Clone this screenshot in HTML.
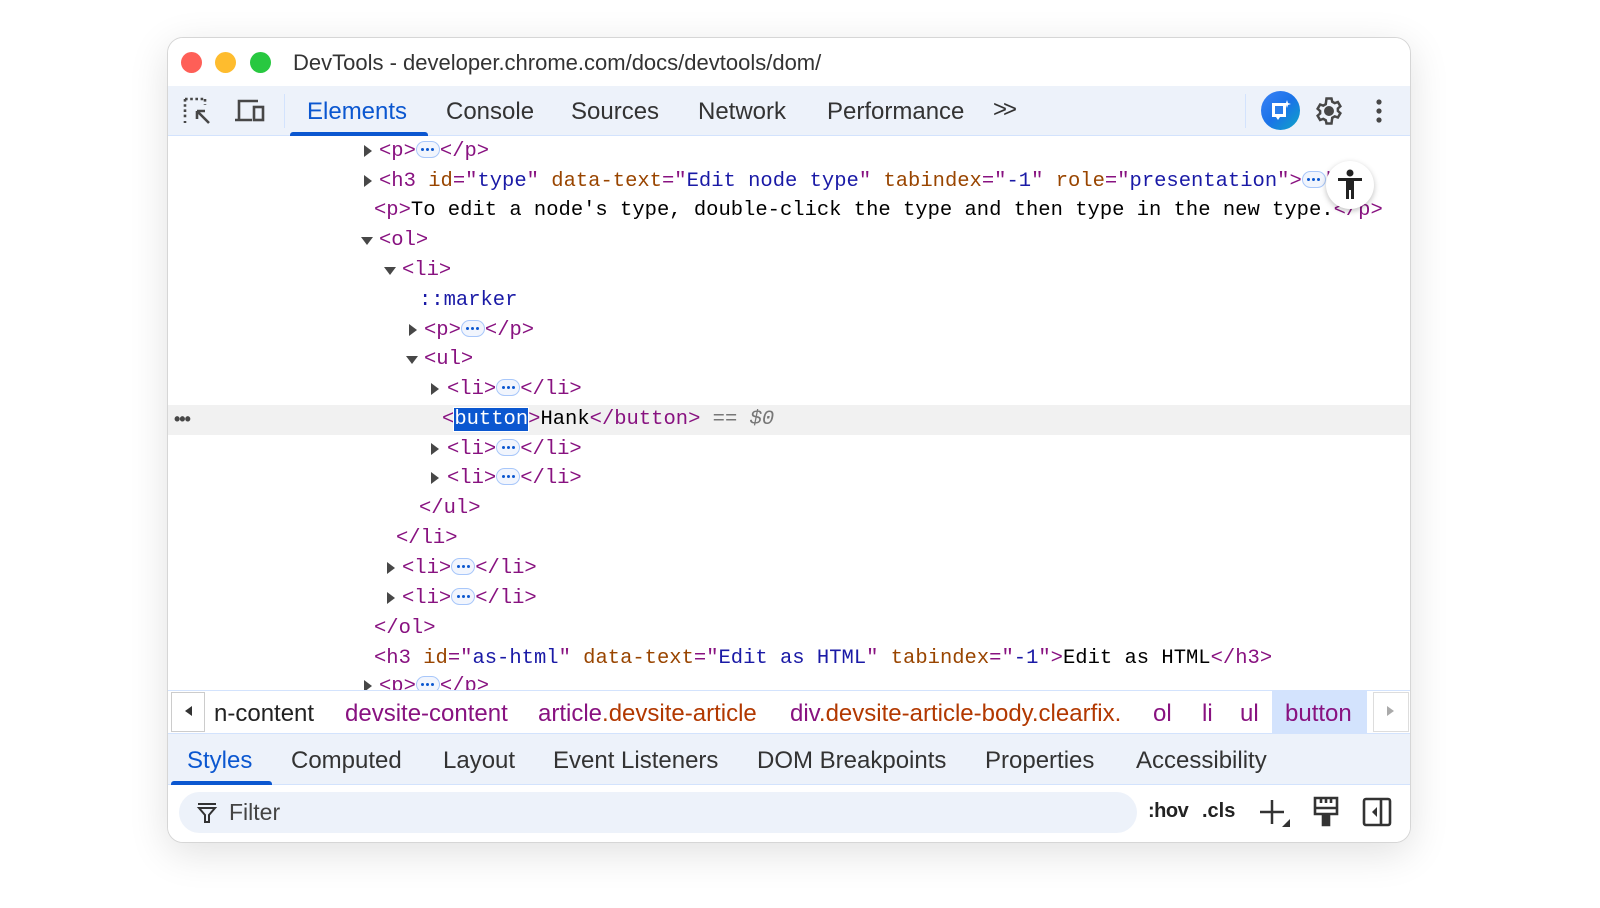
<!DOCTYPE html>
<html><head><meta charset="utf-8">
<style>
*{box-sizing:border-box;margin:0;padding:0}
body{width:1600px;height:908px;background:#fff;position:relative;overflow:hidden;font-family:"Liberation Sans",sans-serif}
.win{position:absolute;left:167px;top:37px;width:1244px;height:806px;border-radius:16px;border:1px solid #d6d6d6;background:#fff;overflow:hidden;box-shadow:0 10px 40px rgba(0,0,0,.12)}
.title{position:absolute;left:0;top:0;width:100%;height:48px;background:#fff}
.dot{position:absolute;top:14px;width:21px;height:21px;border-radius:50%}
.ttl{position:absolute;left:125px;top:12px;font-size:22px;color:#333}
.tb{position:absolute;left:0;top:48px;width:100%;height:50px;background:#edf2fa;border-bottom:1px solid #d3e3fd}
.tab{position:absolute;top:12px;font-size:24px;color:#333}
.dom{position:absolute;left:0;top:99px;width:100%;height:553px;background:#fff;overflow:hidden}
.ln{position:absolute;font-family:"Liberation Mono",monospace;font-size:20.5px;white-space:pre;height:30px;line-height:30px}
.t{color:#881280}.an{color:#994500}.av{color:#1a1aa6}.k{color:#1a1aa6}
.tri{position:absolute;width:0;height:0}
.tr{border-top:6px solid transparent;border-bottom:6px solid transparent;border-left:8px solid #474747}
.td{border-left:6px solid transparent;border-right:6px solid transparent;border-top:8px solid #474747}
.el{display:inline-flex;align-items:center;justify-content:center;gap:2px;width:24px;height:17px;border:1.5px solid #a8c7fa;border-radius:9px;vertical-align:middle;position:relative;top:-1px;background:#f1f5fd}
.el i{display:block;width:3px;height:3px;border-radius:50%;background:#0b57d0}
.bc{position:absolute;left:0;top:652px;width:100%;height:44px;background:#fff;border-top:1px solid #d3e3fd;border-bottom:1px solid #d3e3fd}
.bci{position:absolute;top:9px;font-size:24px}
.st{position:absolute;left:0;top:696px;width:100%;height:51px;background:#edf2fa;border-bottom:1px solid #d3e3fd}
.fr{position:absolute;left:0;top:747px;width:100%;height:59px;background:#fff}
</style></head><body>
<div class="win">
 <div class="title">
  <div class="dot" style="left:13px;background:#fe5f57"></div>
  <div class="dot" style="left:47px;background:#febc2e"></div>
  <div class="dot" style="left:82px;background:#28c840"></div>
  <div class="ttl">DevTools - developer.chrome.com/docs/devtools/dom/</div>
 </div>
 <div class="tb">
  <svg style="position:absolute;left:14px;top:10px" width="30" height="30" viewBox="0 0 30 30" fill="none" stroke="#474747" stroke-width="2.6"><path d="M3 3h20M3 3v20M3 25v2M23 3v6" stroke-dasharray="2.6 2.6"/><path d="M27 27L15 15M15 15v8M15 15h8"/></svg>
  <svg style="position:absolute;left:66px;top:12px" width="32" height="26" viewBox="0 0 32 26" fill="none" stroke="#474747" stroke-width="2.6"><path d="M5 22V3h19M1 22h17"/><rect x="20" y="9" width="9" height="13"/></svg>
  <div style="position:absolute;left:116px;top:8px;width:1px;height:34px;background:#d3e3fd"></div>
  <div class="tab" style="left:139px;color:#0b57d0">Elements</div>
  <div style="position:absolute;left:122px;top:46px;width:138px;height:4px;background:#0b57d0;border-radius:3px 3px 0 0"></div>
  <div class="tab" style="left:278px">Console</div>
  <div class="tab" style="left:403px">Sources</div>
  <div class="tab" style="left:530px">Network</div>
  <div class="tab" style="left:659px">Performance</div>
  <div class="tab" style="left:825px;font-size:24px;top:10px;letter-spacing:-4px">&gt;&gt;</div>
  <div style="position:absolute;left:1077px;top:8px;width:1px;height:34px;background:#d3e3fd"></div>
  <div style="position:absolute;left:1093px;top:5px;width:39px;height:39px;border-radius:50%;background:linear-gradient(135deg,#3b82f6,#1a73e8,#0ea5c6)"></div>
  <svg style="position:absolute;left:1101px;top:13px" width="24" height="24" viewBox="0 0 24 24"><path d="M3 4h14v14h-6l-2 3-2-3H3z" fill="#fff"/><path d="M6 7h8v8H6z" fill="#2b7de9"/><path d="M18 1l1 3 3 1-3 1-1 3-1-3-3-1 3-1z" fill="#fff"/></svg>
  <svg style="position:absolute;left:1146px;top:10px" width="30" height="30" viewBox="0 0 24 24" fill="none" stroke="#474747" stroke-width="2"><circle cx="12" cy="12" r="3" fill="#474747"/><path d="M10 2h4l.6 2.6 2 1.1 2.5-.9 2 3.4-2 1.8v2l2 1.8-2 3.4-2.5-.9-2 1.1L14 22h-4l-.6-2.6-2-1.1-2.5.9-2-3.4 2-1.8v-2l-2-1.8 2-3.4 2.5.9 2-1.1z"/></svg>
  <svg style="position:absolute;left:1207px;top:12px" width="8" height="26"><circle cx="4" cy="4" r="2.6" fill="#474747"/><circle cx="4" cy="13" r="2.6" fill="#474747"/><circle cx="4" cy="22" r="2.6" fill="#474747"/></svg>
 </div>
 <div class="dom">
  <div style="position:absolute;left:0;top:268px;width:100%;height:30px;background:#f1f1f1"></div>
  <div style="position:absolute;left:6px;top:272px;font-size:18px;color:#474747;font-weight:bold;letter-spacing:-1px">•••</div>

  <div class="tri tr" style="left:196px;top:8px"></div>
  <div class="ln" style="left:211px;top:0"><span class="t">&lt;p&gt;</span><span class="el"><i></i><i></i><i></i></span><span class="t">&lt;/p&gt;</span></div>
  <div class="tri tr" style="left:196px;top:38px"></div>
  <div class="ln" style="left:211px;top:30px"><span class="t">&lt;h3 </span><span class="an">id</span><span class="t">="</span><span class="av">type</span><span class="t">" </span><span class="an">data-text</span><span class="t">="</span><span class="av">Edit node type</span><span class="t">" </span><span class="an">tabindex</span><span class="t">="</span><span class="av">-1</span><span class="t">" </span><span class="an">role</span><span class="t">="</span><span class="av">presentation</span><span class="t">"&gt;</span><span class="el"><i></i><i></i><i></i></span><span class="t">h3&gt;</span></div>
  <div class="ln" style="left:206px;top:59px"><span class="t">&lt;p&gt;</span>To edit a node's type, double-click the type and then type in the new type.<span class="t">&lt;/p&gt;</span></div>
  <div style="position:absolute;left:1158px;top:24px;width:48px;height:48px;border-radius:50%;background:#fff;box-shadow:0 2px 6px rgba(0,0,0,.25)"></div>
  <svg style="position:absolute;left:1168px;top:32px" width="28" height="32" viewBox="0 0 28 32" fill="#222"><circle cx="14" cy="4" r="3.5"/><path d="M2 9h24v3h-8v18h-3v-9h-2v9h-3V12H2z"/></svg>

  <div class="tri td" style="left:193px;top:100px"></div>
  <div class="ln" style="left:211px;top:89px"><span class="t">&lt;ol&gt;</span></div>
  <div class="tri td" style="left:216px;top:130px"></div>
  <div class="ln" style="left:234px;top:119px"><span class="t">&lt;li&gt;</span></div>
  <div class="ln" style="left:251px;top:149px"><span class="k">::marker</span></div>
  <div class="tri tr" style="left:241px;top:187px"></div>
  <div class="ln" style="left:256px;top:179px"><span class="t">&lt;p&gt;</span><span class="el"><i></i><i></i><i></i></span><span class="t">&lt;/p&gt;</span></div>
  <div class="tri td" style="left:238px;top:219px"></div>
  <div class="ln" style="left:256px;top:208px"><span class="t">&lt;ul&gt;</span></div>
  <div class="tri tr" style="left:263px;top:246px"></div>
  <div class="ln" style="left:279px;top:238px"><span class="t">&lt;li&gt;</span><span class="el"><i></i><i></i><i></i></span><span class="t">&lt;/li&gt;</span></div>
  <div class="ln" style="left:274px;top:268px"><span class="t">&lt;</span><span style="background:#0b57d0;color:#fff;outline:1px solid #fff">button</span><span class="t">&gt;</span>Hank<span class="t">&lt;/button&gt;</span><span style="color:#777"> == <i>$0</i></span></div>
  <div class="tri tr" style="left:263px;top:306px"></div>
  <div class="ln" style="left:279px;top:298px"><span class="t">&lt;li&gt;</span><span class="el"><i></i><i></i><i></i></span><span class="t">&lt;/li&gt;</span></div>
  <div class="tri tr" style="left:263px;top:335px"></div>
  <div class="ln" style="left:279px;top:327px"><span class="t">&lt;li&gt;</span><span class="el"><i></i><i></i><i></i></span><span class="t">&lt;/li&gt;</span></div>
  <div class="ln" style="left:251px;top:357px"><span class="t">&lt;/ul&gt;</span></div>
  <div class="ln" style="left:228px;top:387px"><span class="t">&lt;/li&gt;</span></div>
  <div class="tri tr" style="left:219px;top:425px"></div>
  <div class="ln" style="left:234px;top:417px"><span class="t">&lt;li&gt;</span><span class="el"><i></i><i></i><i></i></span><span class="t">&lt;/li&gt;</span></div>
  <div class="tri tr" style="left:219px;top:455px"></div>
  <div class="ln" style="left:234px;top:447px"><span class="t">&lt;li&gt;</span><span class="el"><i></i><i></i><i></i></span><span class="t">&lt;/li&gt;</span></div>
  <div class="ln" style="left:206px;top:477px"><span class="t">&lt;/ol&gt;</span></div>
  <div class="ln" style="left:206px;top:507px"><span class="t">&lt;h3 </span><span class="an">id</span><span class="t">="</span><span class="av">as-html</span><span class="t">" </span><span class="an">data-text</span><span class="t">="</span><span class="av">Edit as HTML</span><span class="t">" </span><span class="an">tabindex</span><span class="t">="</span><span class="av">-1</span><span class="t">"&gt;</span>Edit as HTML<span class="t">&lt;/h3&gt;</span></div>
  <div class="tri tr" style="left:196px;top:543px"></div>
  <div class="ln" style="left:211px;top:535px"><span class="t">&lt;p&gt;</span><span class="el"><i></i><i></i><i></i></span><span class="t">&lt;/p&gt;</span></div>
 </div>
 <div class="bc">
  <div style="position:absolute;left:3px;top:1px;width:34px;height:40px;border:1px solid #ccc;background:#fff"></div>
  <div class="tri" style="left:17px;top:15px;border-top:5px solid transparent;border-bottom:5px solid transparent;border-right:7px solid #333"></div>
  <div class="bci" style="left:46px;color:#222">n-content</div>
  <div class="bci" style="left:177px;color:#881280">devsite-content</div>
  <div class="bci" style="left:370px;color:#881280">article<span style="color:#b23800">.devsite-article</span></div>
  <div class="bci" style="left:622px;color:#881280">div<span style="color:#b23800">.devsite-article-body.clearfix.</span></div>
  <div class="bci" style="left:985px;color:#881280">ol</div>
  <div class="bci" style="left:1034px;color:#881280">li</div>
  <div class="bci" style="left:1072px;color:#881280">ul</div>
  <div style="position:absolute;left:1104px;top:0;width:95px;height:42px;background:#d3e3fd"></div>
  <div class="bci" style="left:1117px;color:#881280">button</div>
  <div style="position:absolute;left:1205px;top:1px;width:36px;height:40px;border:1px solid #ddd;background:#fff"></div>
  <div class="tri" style="left:1219px;top:15px;border-top:5px solid transparent;border-bottom:5px solid transparent;border-left:7px solid #aaa"></div>
 </div>
 <div class="st">
  <div class="tab" style="left:19px;top:13px;color:#0b57d0">Styles</div>
  <div style="position:absolute;left:3px;top:47px;width:101px;height:4px;background:#0b57d0;border-radius:3px 3px 0 0"></div>
  <div class="tab" style="left:123px;top:13px">Computed</div>
  <div class="tab" style="left:275px;top:13px">Layout</div>
  <div class="tab" style="left:385px;top:13px">Event Listeners</div>
  <div class="tab" style="left:589px;top:13px">DOM Breakpoints</div>
  <div class="tab" style="left:817px;top:13px">Properties</div>
  <div class="tab" style="left:968px;top:13px">Accessibility</div>
 </div>
 <div class="fr">
  <div style="position:absolute;left:11px;top:7px;width:958px;height:41px;border-radius:21px;background:#edf2fa"></div>
  <svg style="position:absolute;left:28px;top:17px" width="22" height="22" viewBox="0 0 22 22" fill="none" stroke="#333" stroke-width="2"><path d="M2 2h18M3 6h16l-6 7v7h-4v-7z"/></svg>
  <div style="position:absolute;left:61px;top:14px;font-size:23px;color:#444">Filter</div>
  <div style="position:absolute;left:980px;top:15px;font-size:20px;color:#222;font-weight:bold;letter-spacing:-.5px">:hov</div>
  <div style="position:absolute;left:1034px;top:15px;font-size:20px;color:#222;font-weight:bold">.cls</div>
  <svg style="position:absolute;left:1090px;top:12px" width="34" height="32" viewBox="0 0 34 32"><path d="M14 3v24M2 15h24" stroke="#333" stroke-width="2.5"/><path d="M32 22v8h-8z" fill="#333"/></svg>
  <svg style="position:absolute;left:1144px;top:10px" width="28" height="34" viewBox="0 0 28 34" fill="none" stroke="#333" stroke-width="2.6"><path d="M3 3h22v16H3zM3 13h22M9 3v5M14 3v5M19 3v5"/><path d="M11 19v11h6V19" fill="#333"/></svg>
  <svg style="position:absolute;left:1194px;top:12px" width="30" height="30" viewBox="0 0 30 30" fill="none" stroke="#333" stroke-width="2.6"><rect x="2" y="2" width="26" height="26" rx="2"/><path d="M19 2v26"/><path d="M15 10v10l-5-5z" fill="#333" stroke="none"/></svg>
 </div>
</div>
</body></html>
